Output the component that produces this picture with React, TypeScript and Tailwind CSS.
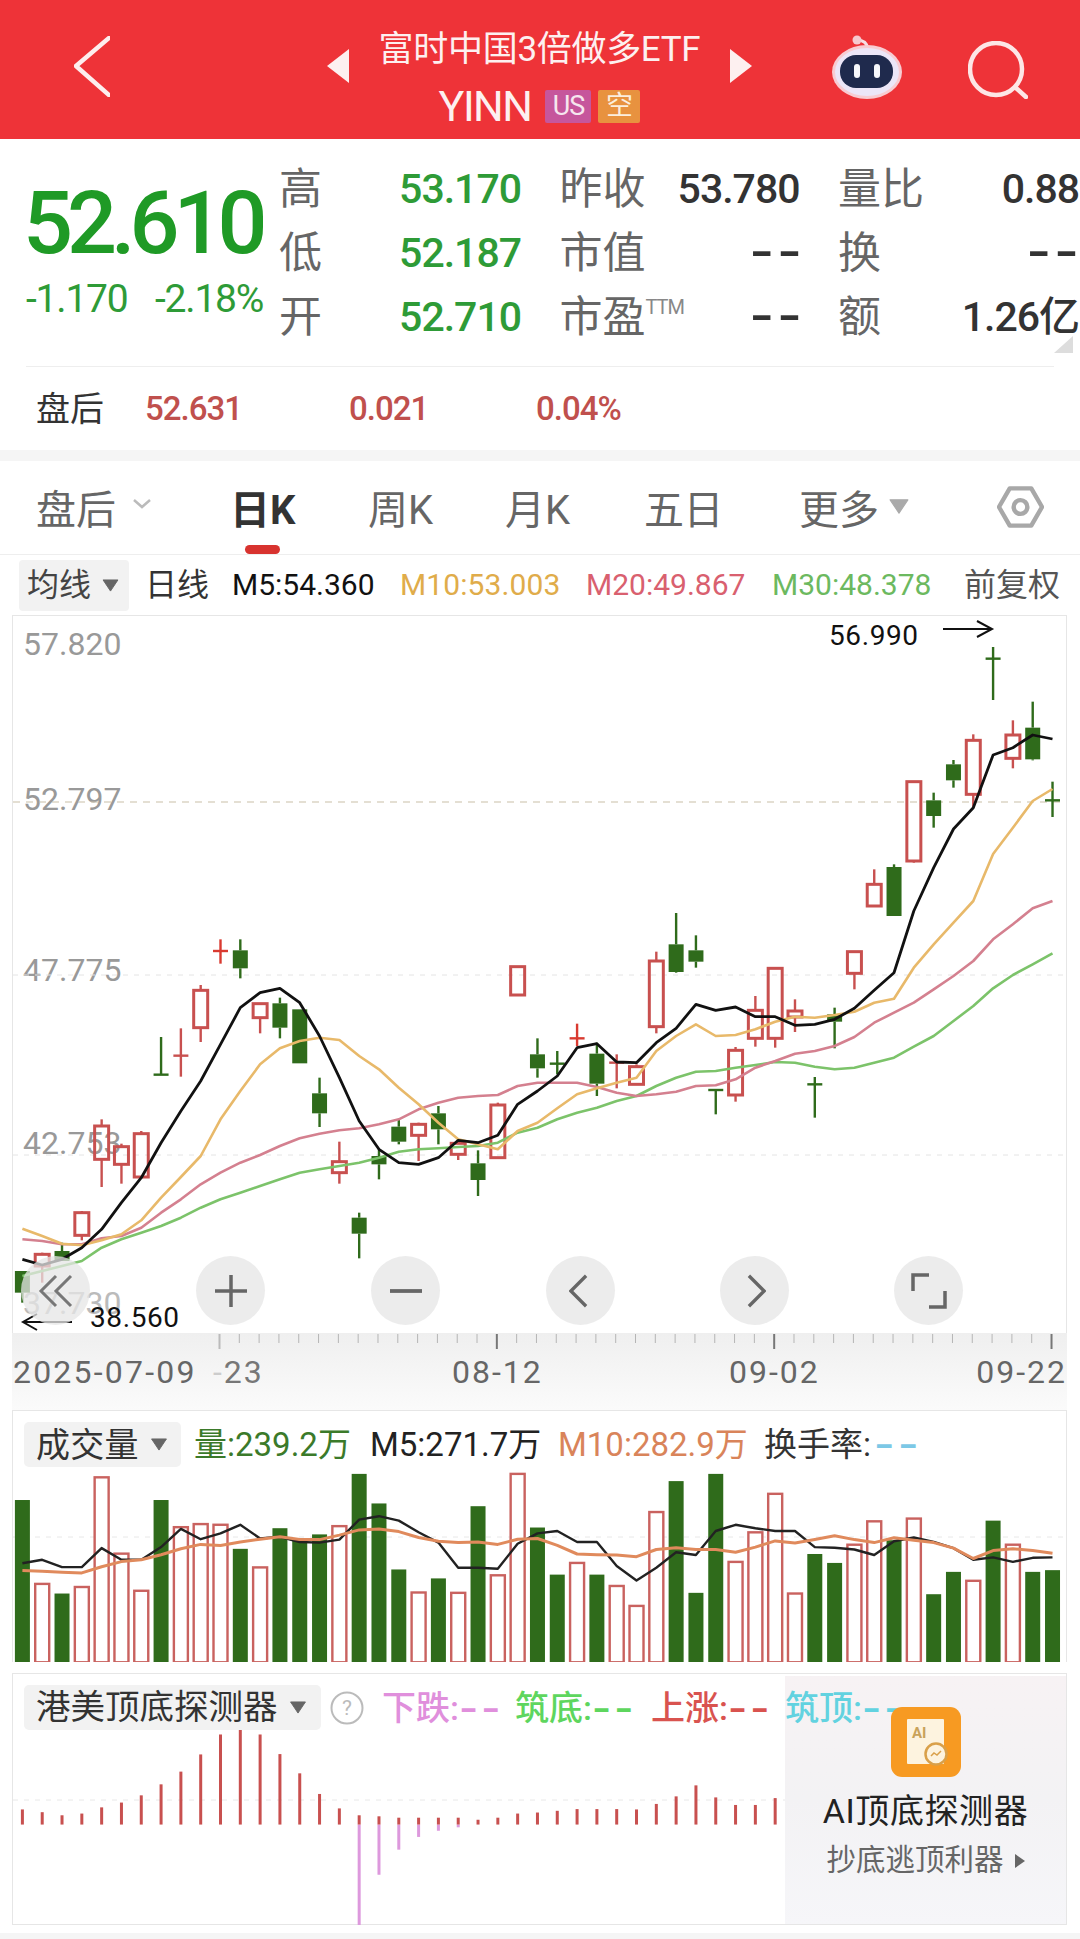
import React from "react";

const X = (i: number) => 21.4 + i * 19.81;
const Y = (y: number) => 900 + y / 3;
const Y3 = (y: number) => 460 + y / 3;
const VY = (y: number) => 1400 + y * 0.3438;

// kind (g green, r red, b bright red), wick top, wick bottom, body top, body bottom
type C = ["g" | "r" | "b", number, number, number, number];
const lower: C[] = [
  ["g", 1110, 1205, 1110, 1175], ["r", 1055, 1145, 1060, 1095], ["g", 1025, 1080, 1050, 1080], ["r", 930, 1018, 935, 1003],
  ["r", 655, 858, 675, 775], ["r", 728, 848, 737, 790], ["r", 690, 828, 698, 828], ["g", 408, 522, 521, 521],
  ["r", 382, 527, 464, 464], ["r", 252, 423, 268, 380], ["b", 115, 188, 150, 150], ["g", 115, 232, 148, 202],
  ["r", 308, 397, 308, 350], ["g", 290, 412, 307, 380], ["g", 325, 487, 325, 487], ["g", 530, 678, 577, 637],
  ["r", 722, 848, 782, 815], ["g", 935, 1072, 950, 998], ["g", 745, 835, 765, 790], ["g", 655, 730, 677, 722],
  ["r", 665, 780, 670, 703], ["g", 615, 730, 637, 685], ["r", 722, 777, 727, 760], ["g", 748, 885, 787, 837],
  ["r", 605, 772, 612, 770], ["r", 197, 282, 197, 282], ["g", 412, 530, 460, 502], ["g", 450, 520, 488, 488],
  ["b", 368, 435, 412, 412], ["g", 425, 585, 458, 548], ["r", 460, 562, 485, 485], ["r", 490, 550, 497, 550],
  ["r", 152, 397, 180, 377], ["g", 36, 215, 130, 213], ["g", 103, 200, 148, 182], ["g", 565, 640, 567, 567],
  ["r", 438, 602, 448, 582], ["r", 285, 437, 328, 412], ["r", 200, 440, 202, 412], ["r", 295, 393, 330, 348],
  ["g", 528, 650, 550, 550], ["g", 320, 442, 340, 362], ["r", 150, 265, 152, 217],
];
const upper: C[] = [
  ["r", 1225, 1335, 1270, 1335], ["g", 1210, 1365, 1218, 1365], ["r", 962, 1205, 962, 1200], ["g", 995, 1100, 1018, 1065],
  ["g", 897, 980, 910, 958], ["r", 820, 1040, 838, 1000], ["g", 558, 717, 593, 593], ["r", 778, 922, 822, 892],
  ["g", 722, 898, 800, 895], ["g", 962, 1068, 1018, 1018],
];
const candles: C[] = [
  ...lower.map(([k, a, b, c, d]): C => [k, Y(a), Y(b), Y(c), Y(d)]),
  ...upper.map(([k, a, b, c, d]): C => [k, Y3(a), Y3(b), Y3(c), Y3(d)]),
];

const ma5 = [1075, 1092, 1075, 1040, 985, 905, 830, 725, 630, 540, 430, 320, 275, 262, 305, 405, 530, 660, 745, 785, 790, 770, 718, 725, 703, 610, 570, 525, 440, 428, 483, 485, 425, 382, 310, 328, 318, 347, 347, 373, 370, 355, 322, 268, 215, 30, -100, -216, -280, -438, -460, -498, -486];
const ma10 = [983, 1005, 1028, 1033, 1018, 1000, 958, 890, 828, 765, 655, 570, 490, 442, 420, 410, 417, 465, 505, 560, 610, 665, 715, 730, 745, 690, 665, 622, 580, 562, 545, 530, 450, 405, 370, 405, 402, 385, 362, 347, 350, 342, 332, 305, 293, 200, 130, 65, 0, -141, -220, -300, -336];
const ma20 = [1015, 1020, 1030, 1030, 1012, 1005, 980, 935, 895, 850, 815, 785, 762, 735, 712, 698, 688, 682, 670, 655, 625, 605, 590, 585, 582, 555, 545, 545, 545, 558, 575, 585, 580, 572, 555, 553, 535, 500, 480, 458, 450, 435, 408, 365, 335, 305, 265, 225, 180, 115, 70, 22, 0];
const ma30 = [1125, 1110, 1095, 1080, 1040, 1015, 995, 975, 950, 920, 895, 875, 855, 835, 815, 805, 795, 785, 770, 752, 745, 742, 738, 735, 725, 695, 680, 655, 635, 620, 600, 585, 555, 530, 512, 510, 500, 492, 483, 485, 497, 505, 500, 485, 470, 437, 405, 360, 315, 262, 222, 190, 157];

const line = (a: number[], f: (n: number) => number) => a.map((v, i) => `${X(i).toFixed(1)},${f(v).toFixed(1)}`).join(" ");

const vols: ["g" | "r", number][] = [
  ["g", 288], ["r", 532], ["g", 560], ["r", 541], ["r", 222], ["r", 444], ["r", 552], ["g", 288], ["r", 367], ["r", 358], ["r", 360], ["g", 430], ["r", 484], ["g", 370], ["g", 405], ["g", 388], ["r", 364], ["g", 212], ["g", 298], ["g", 490], ["r", 557], ["g", 516], ["r", 558], ["g", 306], ["r", 507], ["r", 212], ["g", 368],
  ["g", 505], ["r", 471], ["g", 505], ["r", 538], ["r", 596], ["r", 323], ["g", 233], ["g", 558], ["g", 212], ["r", 468], ["r", 382], ["r", 270], ["r", 560], ["g", 445], ["g", 471], ["r", 418], ["r", 350], ["g", 405], ["r", 342], ["g", 562], ["g", 497], ["r", 523], ["g", 348], ["r", 418], ["g", 497], ["g", 492],
];
const vma5 = [472, 462, 483, 483, 428, 462, 462, 425, 372, 402, 385, 360, 400, 395, 410, 412, 403, 345, 335, 348, 382, 412, 485, 485, 488, 415, 385, 378, 410, 410, 480, 522, 485, 440, 448, 378, 360, 370, 378, 378, 425, 427, 432, 448, 408, 397, 410, 428, 462, 455, 468, 456, 455];
const vma10 = [493, 495, 498, 500, 482, 467, 462, 447, 430, 417, 420, 410, 402, 395, 403, 403, 390, 375, 372, 380, 397, 408, 412, 410, 417, 402, 400, 420, 445, 447, 448, 453, 432, 427, 432, 432, 440, 425, 407, 413, 403, 392, 403, 412, 398, 405, 412, 428, 458, 435, 430, 435, 443];

const tops = [1188, 1196, 1205, 1200, 1182, 1168, 1147, 1115, 1078, 1028, 970, 945, 970, 1027, 1083, 1143, 1185, 1205, 1208, 1212, 1212, 1212, 1212, 1218, 1212, 1200, 1197, 1192, 1187, 1187, 1187, 1188, 1172, 1150, 1118, 1153, 1175, 1175, 1155];
const pinks: Record<number, number> = { 17: 1525, 18: 1378, 19: 1305, 20: 1268, 21: 1250, 22: 1240 };

const Tri = ({ className }: { className: string }) => (
  <svg viewBox="0 0 18 14" className={className}>
    <path d="M1 1h16L9 13z" fill="currentColor" stroke="currentColor" strokeLinejoin="round" />
  </svg>
);

const Dash = () => <span className="inline-block origin-left scale-x-[1.45] tracking-[2px] w-[40px] font-bold">--</span>;

const Stat = ({ label, value, color, sup, edge }: { label: string; value: string; color: string; sup?: boolean; edge?: boolean }) => (
  <div className="flex items-center justify-between h-[64px]">
    <span className="relative text-[43px] leading-none text-[#666]">
      {label}
      {sup && <span className="absolute left-full top-[1px] text-[20px] text-[#888] tracking-[-1px]">TTM</span>}
    </span>
    {value === "--" ? (
      <span className={`relative ${edge ? "left-0" : "left-[3px]"} inline-block origin-right scale-x-[1.5] text-[42px] font-bold leading-none ${color}`}>
        <span className="tracking-[2px]">-</span>-
      </span>
    ) : (
      <span className={`text-[41px] leading-none tracking-[-1px] font-medium ${color}`}>{value}</span>
    )}
  </div>
);

const RoundBtn = ({ cx, children }: { cx: number; children: React.ReactNode }) => (
  <div className="w-[69px] h-[69px] rounded-full bg-[#e6e6e6]/75 flex items-center justify-center" style={{ marginLeft: cx }}>
    {children}
  </div>
);

export default function App() {
  const g = "#2f6b1b";
  const r = "#c8504f";
  return (
    <div className="w-[1080px] h-[1939px] bg-white overflow-hidden flex flex-col text-[#333] font-[Roboto,'Noto_Sans_CJK_SC',sans-serif]">
      {/* header */}
      <header className="h-[139px] shrink-0 bg-[#ee3338] flex items-center pl-[74px] text-[#fdf0f0]">
        <svg viewBox="0 0 36 61" className="w-[36px] h-[61px] -mt-[6px]" fill="none" stroke="#fdeeee" strokeWidth="4.5" strokeLinecap="round" strokeLinejoin="round">
          <path d="M35 2 2 30l33 29" />
        </svg>
        <svg viewBox="0 0 22 34" className="ml-[217px] w-[22px] h-[34px] -mt-[8px]"><path d="M22 0v34L0 17z" fill="#fdf0f0" /></svg>
        <div className="w-[381px] flex flex-col items-center pt-[20px]">
          <div className="text-[35px] leading-none tracking-[-0.3px]">富时中国3倍做多ETF</div>
          <div className="flex items-center mt-[18px]">
            <span className="text-[43px] leading-none tracking-[-1.5px]">YINN</span>
            <span className="ml-[14px] w-[46px] h-[33px] rounded-[2px] bg-[#c6569c] text-[#f6e6ee] text-[27px] leading-none flex items-center justify-center tracking-[-1px]">US</span>
            <span className="ml-[7px] w-[42px] h-[33px] rounded-[2px] bg-[#e8923f] text-[#fbeede] text-[27px] leading-none flex items-center justify-center">空</span>
          </div>
        </div>
        <svg viewBox="0 0 22 34" className="w-[22px] h-[34px] -mt-[8px]"><path d="M0 0v34l22-17z" fill="#fdf0f0" /></svg>
        <svg viewBox="0 0 70 64" className="ml-[80px] w-[70px] h-[64px] -mt-[5px]">
          <path d="M25 5c6 0 10 2 11 9" fill="none" stroke="#f6dfe3" strokeWidth="3" />
          <circle cx="25" cy="5" r="4.5" fill="#f6c9cf" />
          <ellipse cx="35" cy="37" rx="35" ry="27" fill="#f8ccd2" />
          <ellipse cx="35" cy="37" rx="32" ry="24" fill="#ece6f8" />
          <rect x="8" y="20" width="53" height="33" rx="16" fill="#1f2a4d" />
          <rect x="22" y="29" width="6" height="14" rx="3" fill="#f6f7fb" />
          <rect x="42" y="29" width="6" height="14" rx="3" fill="#f6f7fb" />
        </svg>
        <svg viewBox="0 0 60 58" className="ml-[66px] w-[60px] h-[58px]" fill="none" stroke="#fde6e6" strokeWidth="4.5" strokeLinecap="round">
          <circle cx="28" cy="28" r="26" />
          <path d="M48 47l10 9" />
        </svg>
      </header>

      {/* quote */}
      <section className="h-[227px] shrink-0 flex pl-[23px]">
        <div className="w-[256px]">
          <div className="text-[88px] leading-none tracking-[-6px] font-medium text-[#1f9a26] mt-[40px] whitespace-nowrap">52.610</div>
          <div className="flex text-[39px] leading-none tracking-[-1.2px] text-[#2e9b37] mt-[13px] ml-[3px] whitespace-nowrap">
            <span className="w-[129px]">-1.170</span>
            <span>-2.18%</span>
          </div>
        </div>
        <div className="mt-[18px] grid grid-cols-[242px_240px_241px] gap-x-[38.5px] content-start">
          <div>
            <Stat label="高" value="53.170" color="text-[#2e9b37]" />
            <Stat label="低" value="52.187" color="text-[#2e9b37]" />
            <Stat label="开" value="52.710" color="text-[#2e9b37]" />
          </div>
          <div>
            <Stat label="昨收" value="53.780" color="text-[#333]" />
            <Stat label="市值" value="--" color="text-[#333]" />
            <Stat label="市盈" value="--" color="text-[#333]" sup />
          </div>
          <div>
            <Stat label="量比" value="0.88" color="text-[#333]" />
            <Stat label="换" value="--" color="text-[#333]" edge />
            <Stat label="额" value="1.26亿" color="text-[#333]" />
          </div>
        </div>
      </section>
      <div className="relative shrink-0 h-0 mx-[26px] w-[1028px] border-t border-[#eeeeee]">
        <div className="absolute right-[-19px] top-[-31px] w-0 h-0 border-l-[19px] border-l-transparent border-b-[17px] border-b-[#dddddd]" />
      </div>
      <section className="h-[83px] shrink-0 flex items-center pl-[36px] font-medium">
        <span className="w-[109px] text-[34px] leading-none font-normal">盘后</span>
        <span className="w-[204px] text-[33px] leading-none tracking-[-1px] text-[#c0504d]">52.631</span>
        <span className="w-[187px] text-[33px] leading-none tracking-[-1px] text-[#c0504d]">0.021</span>
        <span className="text-[33px] leading-none tracking-[-1px] text-[#c0504d]">0.04%</span>
      </section>
      <div className="h-[11px] shrink-0 bg-[#f5f5f5]" />

      {/* tabs */}
      <nav className="relative h-[94px] shrink-0 border-b border-[#eeeeee] flex items-center pl-[36px] pt-[6px] text-[40px] leading-none text-[#666] whitespace-nowrap">
        <span className="w-[78px]">盘后</span>
        <svg viewBox="0 0 18 10" className="ml-[19px] w-[18px] h-[10px] -mt-[14px]" fill="none" stroke="#bbbbbb" strokeWidth="2.5"><path d="M1 1l8 7 8-7" /></svg>
        <span className="ml-[79px] w-[62px] font-bold text-[#333]">日K</span>
        <span className="ml-[76px] w-[66px]">周K</span>
        <span className="ml-[71px] w-[68px]">月K</span>
        <span className="ml-[71px] w-[76px] tracking-[-0.5px]">五日</span>
        <span className="ml-[79px] w-[80px]">更多</span>
        <Tri className="ml-[10px] w-[20px] h-[17px] -mt-[8px] text-[#aaaaaa]" />
        <svg viewBox="0 0 48 44" className="ml-[88px] w-[47px] h-[44px] -mt-[8px]" fill="none" stroke="#a8a8a8" strokeWidth="4.5" strokeLinejoin="round">
          <path d="M13 3h22l11 19-11 19H13L2 22z" />
          <circle cx="24" cy="22" r="7" />
        </svg>
        <div className="absolute left-[245px] bottom-0 w-[35px] h-[9px] rounded-full bg-[#d8332f]" />
      </nav>

      {/* indicators */}
      <div className="h-[60px] shrink-0 flex items-center pl-[19px] text-[30px] leading-none whitespace-nowrap">
        <div className="w-[110px] h-[51px] rounded-[4px] bg-[#f2f2f2] flex items-center pl-[8px] text-[#444]">
          <span className="text-[32px]">均线</span>
          <Tri className="ml-[11px] w-[17px] h-[13px] text-[#666]" />
        </div>
        <span className="ml-[16px] w-[87px] text-[32px] text-[#333]">日线</span>
        <span className="w-[168px] text-[#111]">M5:54.360</span>
        <span className="w-[186px] text-[#e0ac4a] tracking-[0.1px]">M10:53.003</span>
        <span className="w-[186px] text-[#d9606f]">M20:49.867</span>
        <span className="w-[192px] text-[#6cb95f]">M30:48.378</span>
        <span className="text-[32px] text-[#555]">前复权</span>
      </div>

      {/* main chart */}
      <section className="relative ml-[12px] w-[1055px] h-[718px] shrink-0 border border-b-0 border-[#e6e6e6] overflow-hidden">
        <span className="absolute left-[10px] top-[12px] text-[32px] leading-[32px] text-[#999]">57.820</span>
        <span className="absolute left-[10px] top-[167px] text-[32px] leading-[32px] text-[#999]">52.797</span>
        <span className="absolute left-[10px] top-[338px] text-[32px] leading-[32px] text-[#999]">47.775</span>
        <span className="absolute left-[10px] top-[511px] text-[32px] leading-[32px] text-[#999]">42.753</span>
        <span className="absolute left-[10px] top-[671px] text-[32px] leading-[32px] text-[#bbbbbb]">37.730</span>
        <svg viewBox="12 615 1055 718" className="absolute left-0 top-0 w-[1055px] h-[718px]">
          <line x1="12" x2="1067" y1="974" y2="974" stroke="#e4e4e4" strokeDasharray="5 6" />
          <line x1="12" x2="1067" y1="1154" y2="1154" stroke="#e4e4e4" strokeDasharray="5 6" />
          <line x1="12" x2="1067" y1="801" y2="801" stroke="#c9bfa8" strokeWidth="1.2" strokeDasharray="7 6" />
          {candles.map(([k, wt, wb, bt, bb], i) => {
            const c = k === "g" ? g : k === "b" ? "#d93a30" : r;
            const x = X(i);
            const flat = bb - bt < 3;
            return (
              <g key={i}>
                <line x1={x} x2={x} y1={wt} y2={bt} stroke={c} strokeWidth="2.4" />
                <line x1={x} x2={x} y1={bb} y2={wb} stroke={c} strokeWidth="2.4" />
                {flat ? (
                  <line x1={x - 7.5} x2={x + 7.5} y1={bt} y2={bt} stroke={c} strokeWidth="2.4" />
                ) : k === "g" ? (
                  <rect x={x - 7.5} y={bt} width="15" height={bb - bt} fill={c} />
                ) : (
                  <rect x={x - 7} y={bt} width="14" height={bb - bt} fill="none" stroke={c} strokeWidth="3" />
                )}
              </g>
            );
          })}
          <polyline points={line(ma30, Y)} fill="none" stroke="#7cc36a" strokeWidth="2.6" strokeLinejoin="round" />
          <polyline points={line(ma20, Y)} fill="none" stroke="#d4808f" strokeWidth="2.6" strokeLinejoin="round" />
          <polyline points={line(ma10, Y)} fill="none" stroke="#e8b96a" strokeWidth="2.6" strokeLinejoin="round" />
          <polyline points={line(ma5, Y)} fill="none" stroke="#111111" strokeWidth="2.8" strokeLinejoin="round" />
          <path d="M942 628h49m-15-8 15 8-15 8" fill="none" stroke="#111" strokeWidth="2" />
          <path d="M71 1321H22m14-8-14 8 14 8" fill="none" stroke="#111" strokeWidth="2" />
        </svg>
        <span className="absolute left-[816px] top-[5px] text-[28px] leading-[30px] text-[#111] tracking-[0.6px]">56.990</span>
        <span className="absolute left-[77px] top-[688px] text-[28px] leading-[28px] text-[#111] tracking-[0.6px]">38.560</span>
        <div className="absolute left-0 top-[640px] flex text-[#666]">
          <RoundBtn cx={8}>
            <svg viewBox="0 0 36 36" className="w-[36px] h-[36px]" fill="none" stroke="#777" strokeWidth="3"><path d="M18 3 3 18l15 15M33 3 18 18l15 15" /></svg>
          </RoundBtn>
          <RoundBtn cx={106}>
            <svg viewBox="0 0 34 34" className="w-[34px] h-[34px]" fill="none" stroke="#666" strokeWidth="3.5"><path d="M17 1v32M1 17h32" /></svg>
          </RoundBtn>
          <RoundBtn cx={106}>
            <svg viewBox="0 0 34 4" className="w-[32px] h-[4px]"><rect width="34" height="4" fill="#666" /></svg>
          </RoundBtn>
          <RoundBtn cx={106}>
            <svg viewBox="0 0 20 34" className="w-[19px] h-[34px] -ml-[4px]" fill="none" stroke="#666" strokeWidth="3.5"><path d="M18 1 2 17l16 16" /></svg>
          </RoundBtn>
          <RoundBtn cx={105}>
            <svg viewBox="0 0 20 34" className="w-[19px] h-[34px] ml-[4px]" fill="none" stroke="#666" strokeWidth="3.5"><path d="M2 1l16 16L2 33" /></svg>
          </RoundBtn>
          <RoundBtn cx={105}>
            <svg viewBox="0 0 36 36" className="w-[36px] h-[36px]" fill="none" stroke="#666" strokeWidth="3.5"><path d="M18 2H2v16M34 18v16H18" /></svg>
          </RoundBtn>
        </div>
      </section>

      {/* time axis */}
      <div className="relative ml-[12px] w-[1055px] h-[77px] shrink-0 bg-linear-to-b from-[#efefef] to-[#fbfbfb] overflow-hidden">
        <svg viewBox="12 1333 1055 20" className="absolute left-0 top-0 w-[1055px] h-[20px]">
          {candles.map((_, i) =>
            i < 10 ? null : [10, 24, 38, 52].includes(i) ? (
              <line key={i} x1={X(i)} x2={X(i)} y1="1334" y2="1349" stroke={i === 10 ? "#bbbbbb" : "#777"} strokeWidth="2" />
            ) : (
              <line key={i} x1={X(i)} x2={X(i)} y1="1334" y2="1343" stroke="#b5b5b5" strokeWidth="1" />
            ),
          )}
        </svg>
        <span className="absolute left-[1px] top-[21px] text-[32px] leading-[36px] tracking-[2.2px] text-[#666]">2025-07-09</span>
        <span className="absolute left-[201px] top-[21px] text-[32px] leading-[36px] tracking-[2px] text-[#777]"><span className="text-[#ccc]">-</span>23</span>
        <span className="absolute left-[440px] top-[21px] text-[32px] leading-[36px] tracking-[2px] text-[#666]">08-12</span>
        <span className="absolute left-[717px] top-[21px] text-[32px] leading-[36px] tracking-[2px] text-[#666]">09-02</span>
        <span className="absolute right-0 top-[21px] text-[32px] leading-[36px] tracking-[2px] text-[#666]">09-22</span>
      </div>

      {/* volume */}
      <section className="relative ml-[12px] w-[1055px] h-[252px] shrink-0 border border-b-0 border-[#e6e6e6] overflow-hidden">
        <svg viewBox="12 1410 1055 252" className="absolute left-0 top-0 w-[1055px] h-[252px]">
          <line x1="12" x2="1067" y1="1536" y2="1536" stroke="#e8e8e8" strokeDasharray="5 6" />
          {vols.map(([k, t], i) => {
            const x = X(i);
            const y = VY(t);
            const b = VY(760);
            return k === "g" ? (
              <rect key={i} x={x - 7.5} y={y} width="15" height={b - y} fill={g} />
            ) : (
              <rect key={i} x={x - 7} y={y} width="14" height={b - y} fill="#fff" stroke="#c9625f" strokeWidth="2.4" />
            );
          })}
          <polyline points={line(vma5, VY)} fill="none" stroke="#222" strokeWidth="2.4" strokeLinejoin="round" />
          <polyline points={line(vma10, VY)} fill="none" stroke="#e08a5c" strokeWidth="3" strokeLinejoin="round" />
        </svg>
        <div className="relative flex items-center h-[45px] mt-[11px] ml-[11px] text-[33px] leading-none whitespace-nowrap">
          <div className="w-[157px] h-[45px] rounded-[5px] bg-[#f2f2f2] flex items-center pl-[12px]">
            <span className="text-[34px] tracking-[0.3px]">成交量</span>
            <Tri className="ml-[11px] w-[18px] h-[13px] text-[#666]" />
          </div>
          <span className="ml-[13px] w-[176px] text-[#3b7a2a]">量:239.2万</span>
          <span className="w-[188px] text-[#222]">M5:271.7万</span>
          <span className="w-[206px] text-[#d9845a]">M10:282.9万</span>
          <span>换手率:</span>
          <span className="text-[#7cc8e6] ml-[3px] inline-block origin-left scale-x-[1.6] font-bold tracking-[2px]">--</span>
        </div>
      </section>
      <div className="h-[11px] shrink-0" />

      {/* detector */}
      <section className="relative ml-[12px] w-[1055px] h-[252px] shrink-0 border border-[#e6e6e6]">
        <svg viewBox="12 1673 1055 251" className="absolute left-0 top-0 w-[1055px] h-[251px]">
          <line x1="12" x2="787" y1="1799" y2="1799" stroke="#e8e8e8" strokeDasharray="5 6" />
          {tops.map((t, i) => (
            <g key={i}>
              {pinks[i] && <rect x={X(i) - 1.5} y={VY(1232)} width="3" height={VY(pinks[i]) - VY(1232)} fill="#dd99dd" />}
              <rect x={X(i) - 1.5} y={VY(t)} width="3" height={VY(1232) - VY(t)} fill="#c8504f" />
            </g>
          ))}
        </svg>
        <div className="absolute right-0 top-[2px] w-[281px] h-[248px] bg-linear-to-b from-[#f7f2f4] via-[#f3f2f4] to-[#f6f6f9]" />
        <div className="relative flex items-center h-[45px] mt-[11px] ml-[11px] text-[34px] leading-none whitespace-nowrap">
          <div className="w-[297px] h-[45px] rounded-[5px] bg-[#f2f2f2] flex items-center pl-[12px]">
            <span className="text-[34.5px]">港美顶底探测器</span>
            <Tri className="ml-[11px] w-[18px] h-[13px] text-[#666]" />
          </div>
          <svg viewBox="0 0 34 34" className="ml-[9px] w-[34px] h-[34px]">
            <circle cx="17" cy="17" r="15.5" fill="none" stroke="#bbbbbb" strokeWidth="2" />
            <text x="17" y="24" textAnchor="middle" fontSize="21" fill="#bbbbbb">?</text>
          </svg>
          <span className="ml-[18px] w-[133px] font-medium text-[#e08fdc]">下跌:<Dash /></span>
          <span className="w-[136px] font-medium text-[#5ed65e]">筑底:<Dash /></span>
          <span className="w-[134px] font-medium text-[#d9534f]">上涨:<Dash /></span>
          <span className="font-medium text-[#62d2e0]">筑顶:<Dash /></span>
        </div>
        <div className="absolute right-0 top-[2px] w-[281px] h-[248px] flex flex-col items-center">
          <svg viewBox="0 0 70 70" className="w-[70px] h-[70px] mt-[31px]">
            <rect width="70" height="70" rx="11" fill="#f79a22" />
            <rect x="16" y="12" width="37" height="45" rx="1" fill="#fdf3df" />
            <text x="21" y="31" fontSize="15" fontWeight="700" fill="#c9a25a" fontFamily="Roboto">AI</text>
            <circle cx="45" cy="47" r="10.5" fill="#fdf3df" stroke="#d9a04a" strokeWidth="2.5" />
            <path d="M40 49l3-3 3 2 4-4" fill="none" stroke="#d9a04a" strokeWidth="1.5" />
          </svg>
          <div className="mt-[17px] text-[34px] leading-none text-[#222] tracking-[0.6px] whitespace-nowrap">AI顶底探测器</div>
          <div className="mt-[18px] flex items-center text-[29.5px] leading-none text-[#666] whitespace-nowrap">
            抄底逃顶利器
            <svg viewBox="0 0 10 14" className="ml-[11px] w-[10px] h-[14px]"><path d="M0 0l10 7-10 7z" fill="#666" /></svg>
          </div>
        </div>
      </section>
      <div className="h-[8px] shrink-0" />
      <div className="flex-1 bg-[#f5f5f5]" />
    </div>
  );
}
